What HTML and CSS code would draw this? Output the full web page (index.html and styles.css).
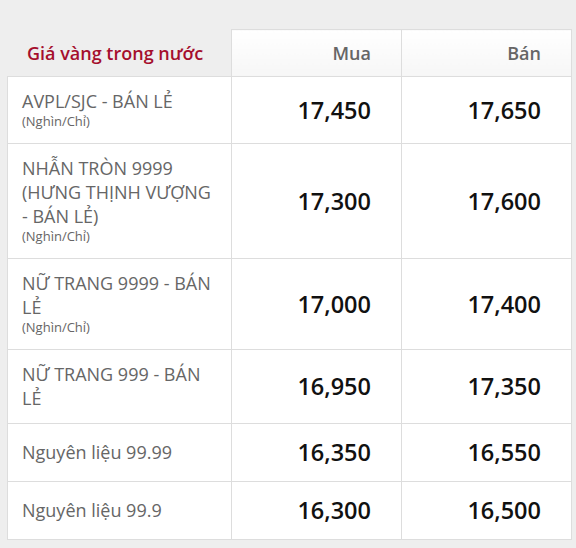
FILE: index.html
```html
<!DOCTYPE html>
<html lang="vi">
<head>
<meta charset="utf-8">
<link rel="stylesheet" href="styles.css">
</head>
<body>
<table class="gold">
  <colgroup>
    <col class="c-name">
    <col class="c-buy">
    <col class="c-sell">
  </colgroup>
  <thead>
    <tr>
      <th class="title">Giá vàng trong nước</th>
      <th class="col">Mua</th>
      <th class="col">Bán</th>
    </tr>
  </thead>
  <tbody>
    <tr>
      <td class="name">AVPL/SJC - BÁN LẺ<span class="unit">(Nghìn/Chỉ)</span></td>
      <td class="num">17,450</td>
      <td class="num">17,650</td>
    </tr>
    <tr>
      <td class="name">NHẪN TRÒN 9999 (HƯNG THỊNH VƯỢNG - BÁN LẺ)<span class="unit">(Nghìn/Chỉ)</span></td>
      <td class="num">17,300</td>
      <td class="num">17,600</td>
    </tr>
    <tr>
      <td class="name">NỮ TRANG 9999 - BÁN LẺ<span class="unit">(Nghìn/Chỉ)</span></td>
      <td class="num">17,000</td>
      <td class="num">17,400</td>
    </tr>
    <tr>
      <td class="name">NỮ TRANG 999 - BÁN LẺ</td>
      <td class="num">16,950</td>
      <td class="num">17,350</td>
    </tr>
    <tr>
      <td class="name">Nguyên liệu 99.99</td>
      <td class="num">16,350</td>
      <td class="num">16,550</td>
    </tr>
    <tr>
      <td class="name">Nguyên liệu 99.9</td>
      <td class="num">16,300</td>
      <td class="num">16,500</td>
    </tr>
  </tbody>
</table>
</body>
</html>
```
FILE: styles.css
```css
html, body {
  margin: 0;
  padding: 0;
  background: #eeeeee;
}
body {
  padding: 29px 5px 0 7px;
  font-family: "Open Sans", "Liberation Sans", sans-serif;
}
.gold {
  border-collapse: collapse;
  width: 564px;
  table-layout: fixed;
}
.c-name { width: 224px; }
.c-buy { width: 170px; }
.c-sell { width: 170px; }
.gold th, .gold td {
  border: 1px solid #dddddd;
}
.gold th {
  height: 46px;
  padding: 0 30px 0 0;
  font-size: 18px;
  font-weight: 600;
  line-height: 24px;
  color: #666666;
  text-align: right;
  background: linear-gradient(#ffffff, #f6f6f6);
}
.gold th.title {
  text-align: left;
  padding: 0 0 0 19px;
  white-space: nowrap;
  color: #a50e2d;
  background: transparent;
  border-top-color: transparent;
  border-left-color: transparent;
}
.gold td {
  background: #ffffff;
}
.name {
  padding: 12px 14px 13px;
  vertical-align: middle;
  font-size: 18px;
  line-height: 24px;
  color: #666666;
}
.unit {
  display: block;
  font-size: 13px;
  line-height: 17px;
}
.num {
  padding: 12px 30px 12px 0;
  text-align: right;
  vertical-align: middle;
  font-size: 23.5px;
  font-weight: 600;
  line-height: 33px;
  color: #111111;
}
```
